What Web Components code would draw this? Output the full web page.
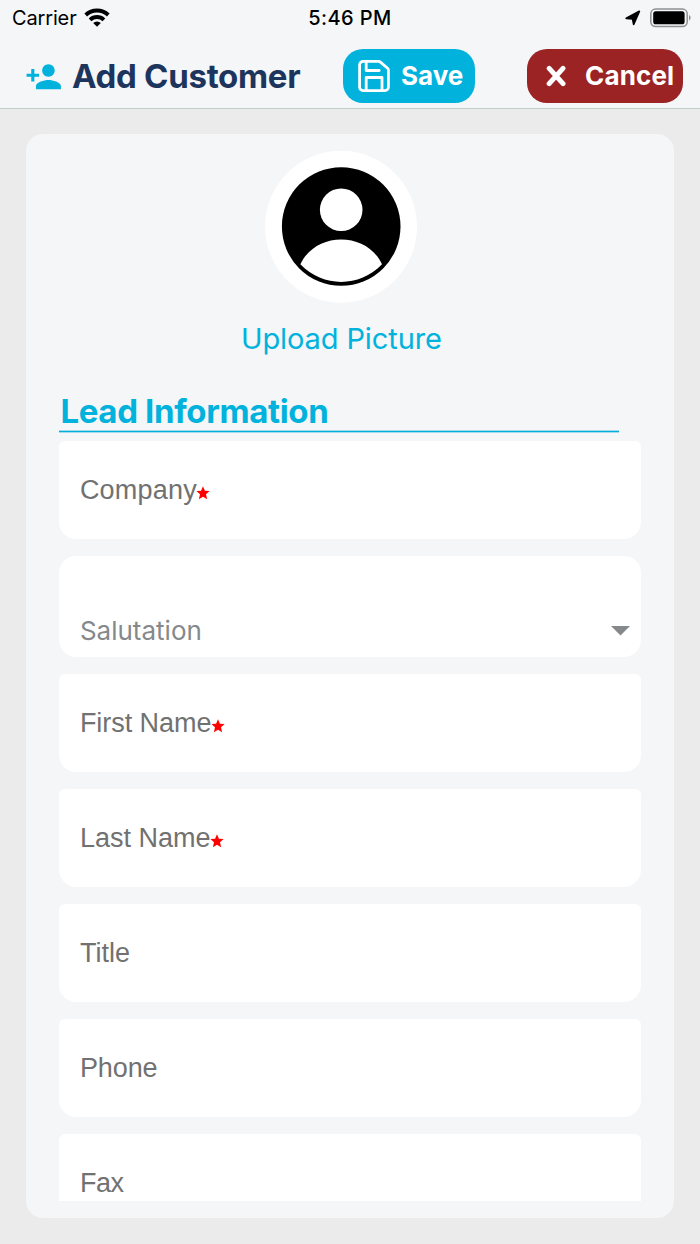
<!DOCTYPE html>
<html lang="en">
<head>
<meta charset="utf-8">
<title>Add Customer</title>
<style>
html,body{margin:0;height:100%;overflow:hidden;background:#ebebeb;font-family:Inter,"Noto Sans",sans-serif}
</style>
</head>
<body>
<customer-app></customer-app>
<script>
function define(name, html) {
  const t = document.createElement('template');
  t.innerHTML = html;
  customElements.define(name, class extends HTMLElement {
    constructor() {
      super();
      this.attachShadow({ mode: 'open' }).appendChild(t.content.cloneNode(true));
    }
  });
}

define('status-bar', `
<style>
:host{display:grid;grid-template-columns:1fr auto 1fr;align-items:center;height:36px;padding:0 8px 0 12px;font-size:20px;line-height:24px;color:#000}
.l,.r{display:flex;align-items:center}
.r{justify-content:flex-end}
.c{letter-spacing:-.15px}
.t{font-weight:500;letter-spacing:.4px;margin-left:-4px}
svg{display:block}
.w{margin-left:7.500px;margin-top:-2px}
</style>
<div class="l"><span class="c">Carrier</span>
<svg class="w" width="26" height="19" viewBox="0 0 26 19" fill="none" stroke="#000" stroke-width="3.9"><path d="M1.700 7a16.400 16.400 0 0 1 22.600 0"/><path d="M6.100 11.800a10 10 0 0 1 13.800 0"/><path d="M13 18.800l-3.800-3.700a5.400 5.400 0 0 1 7.600 0z" fill="#000" stroke="none"/></svg></div>
<span class="t">5:46 PM</span>
<div class="r">
<svg width="16" height="16" viewBox="0 0 16 16" stroke="#000" stroke-width="1.800" stroke-linejoin="round"><path d="M14.300 1.400L8.700 14.200 7.600 8.900 1.300 8.300z"/></svg>
<svg width="42" height="20" viewBox="0 0 42 20" style="margin-left:9px"><rect x=".8" y="1" width="36.400" height="17.600" rx="4.800" fill="none" stroke="#8f9091" stroke-width="1.500"/><rect x="3.200" y="3.300" width="31.400" height="13" rx="2.600"/><path d="M39 6.800q3.400 2.900 0 6z" fill="#8f9091"/></svg>
</div>`);

define('pill-button', `
<style>
:host{display:flex;align-items:center;box-sizing:border-box;height:54px;border-radius:20px;background:var(--bg);color:#fff;font-weight:700;font-size:26px;line-height:32px;white-space:nowrap}
::slotted(svg){display:block;flex:none}
</style><slot name="icon"></slot><slot></slot>`);

define('app-header', `
<style>
:host{display:block;box-sizing:border-box;height:109px;background:#f4f6f8;border-bottom:1px solid #c3cacb}
.bar{display:flex;align-items:center;height:54px;margin-top:12.5px;padding:0 17px 0 25px}
h1{margin:0 0 0 9.500px;font-size:33px;line-height:40px;font-weight:700;color:#1d345d;white-space:nowrap;letter-spacing:-.3px;width:271px}
.s{--bg:#00b2dc;width:132px;margin-right:52px;flex:none}
.c{--bg:#9b2324;width:156px;flex:none;letter-spacing:.15px}
</style>
<status-bar></status-bar>
<div class="bar">
<svg width="37.5" height="37.5" viewBox="0 0 24 24" fill="#00b2dc" style="flex:none;margin-top:1.500px"><path d="M15 12c2.21 0 4-1.79 4-4s-1.79-4-4-4-4 1.79-4 4 1.79 4 4 4zm-9-2V7H4v3H1v2h3v3h2v-3h3v-2H6zm9 4c-2.67 0-8 1.34-8 4v2h16v-2c0-2.66-5.33-4-8-4z"/></svg>
<h1>Add Customer</h1>
<pill-button class="s"><svg slot="icon" width="32" height="32" viewBox="0 0 32 32" fill="none" stroke="#fff" stroke-width="2.8" stroke-linejoin="round" stroke-linecap="round" style="margin:0 11px 0 15px"><path d="M5 1.400H20.600Q21.600 1.400 22.400 2.100L29.600 8.300Q30.400 9 30.400 10V27.200A3.400 3.400 0 0 1 27 30.600H5A3.400 3.400 0 0 1 1.600 27.200V4.800A3.400 3.400 0 0 1 5 1.400zM8.200 1.600V10.500H21.200M8.200 30.400V17.500H24V30.400"/></svg><span>Save</span></pill-button>
<pill-button class="c"><svg slot="icon" width="22" height="22" viewBox="0 0 22 22" stroke="#fff" stroke-width="5" stroke-linecap="round" style="margin:0 18px 0 18px"><path d="M4.200 3.400L18 18.600M18 3.400L4.200 18.600"/></svg><span>Cancel</span></pill-button>
</div>`);

define('avatar-upload', `
<style>
:host{display:flex;flex-direction:column;align-items:center;width:564px;color:#00b2dc;font-size:29px;line-height:36px}
svg{display:block}
span{margin-top:18px;letter-spacing:-.1px}
</style>
<svg width="152" height="152" viewBox="0 0 152 152"><circle cx="76" cy="75.700" r="76" fill="#fff"/><circle cx="76.200" cy="75.500" r="59.300"/><circle cx="76.200" cy="58.800" r="21.300" fill="#fff"/><path d="M35.400 113.300C42.700 97.500 58.700 88.500 76.200 88.500S109.700 97.500 117 113.300C94.200 136.800 58.200 136.800 35.400 113.300z" fill="#fff"/></svg>
<span>Upload Picture</span>`);

define('section-title', `
<style>
:host{display:block;box-sizing:border-box;width:560px;height:46px;padding:4px 0 0 1px;background:linear-gradient(#a5dcec 0 1px,#00b0da 1px 2px,#a5dcec 2px) bottom/100% 3px no-repeat;color:#00b2dc;font-size:33px;line-height:40px;font-weight:700;white-space:nowrap;letter-spacing:-.35px}
</style><slot></slot>`);

define('text-field', `
<style>
:host{display:flex;align-items:center;box-sizing:border-box;flex:none;height:98px;padding:0 20.500px;background:#fff;border-radius:6px 6px 17px 17px;color:#717171;font:27px/32px "Liberation Sans",Arial,sans-serif}
svg{display:none;margin:6px 0 0 -.5px;flex:none}
:host([required]) svg{display:block}
</style><slot></slot><svg width="14" height="14" viewBox="0 0 14 14" fill="#f00"><path d="M7 .3l1.900 4.400 4.700.4-3.600 3.200 1.100 4.900L7 10.700 2.900 13.200 4 8.300.4 5.100l4.700-.4z"/></svg>`);

define('select-field', `
<style>
:host{display:flex;justify-content:space-between;align-items:flex-end;box-sizing:border-box;flex:none;height:101px;padding:0 11px 10px 20.500px;background:#fff;border-radius:17px;color:#85898c;font-size:26px;line-height:32px}
svg{display:block;margin-bottom:11px}
</style><slot></slot><svg width="19" height="10" viewBox="0 0 19 10"><path d="M0 0h19L9.500 9.600z" fill="#85898c"/></svg>`);

define('customer-app', `
<style>
:host{display:flex;flex-direction:column;height:1244px;width:700px;background:#ebebeb}
main{box-sizing:border-box;width:648px;height:1084px;margin:25px 0 0 26px;border-radius:17px;background:#f4f6f8;padding:17px 0 17px 33.400px}
.scroll{height:1050px;overflow:hidden}
section-title{margin-top:30px}
.fields{display:flex;flex-direction:column;gap:17px;width:581.200px;margin-top:7.600px}
</style>
<app-header></app-header>
<main><div class="scroll">
<avatar-upload></avatar-upload>
<section-title>Lead Information</section-title>
<div class="fields">
<text-field required><span style="letter-spacing:.2px">Company</span></text-field>
<select-field><span>Salutation</span></select-field>
<text-field required><span style="letter-spacing:-.05px">First Name</span></text-field>
<text-field required><span>Last Name</span></text-field>
<text-field><span>Title</span></text-field>
<text-field><span style="letter-spacing:-.1px">Phone</span></text-field>
<text-field><span style="letter-spacing:-.4px">Fax</span></text-field>
</div></div></main>`);
</script>
</body>
</html>
